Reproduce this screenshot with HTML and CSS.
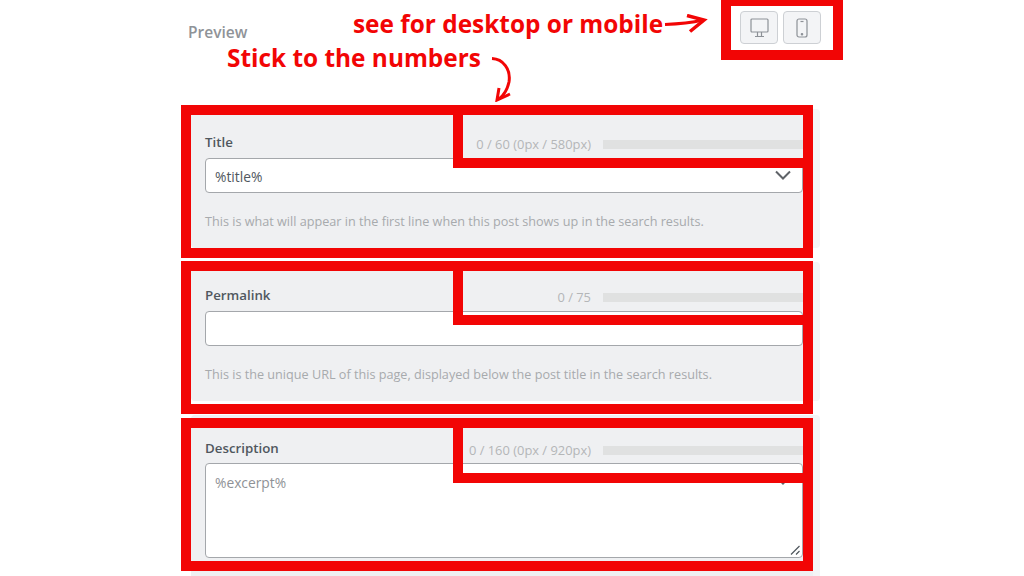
FILE: index.html
```html
<!DOCTYPE html>
<html lang="en">
<head>
  <meta charset="UTF-8" />
  <title>Preview</title>
  <link rel="stylesheet" href="styles.css">
</head>
<body>

<div class="wrap">
  <div class="preview-bar">
    <span class="preview-title">Preview</span>
    <div class="devices">
      <button class="device-btn" type="button" aria-label="Desktop">
        <svg width="19" height="20" viewBox="0 0 19 20" fill="none" stroke="#8d9197" stroke-width="1.2">
          <rect x="1" y="1" width="17" height="13" rx="1" />
          <path d="M7.5 14v4M11.5 14v4M5 18.5h9" />
        </svg>
      </button>
      <button class="device-btn" type="button" aria-label="Mobile">
        <svg width="12" height="20" viewBox="0 0 12 20" fill="none" stroke="#8d9197" stroke-width="1.2">
          <rect x="1" y="1" width="10" height="18" rx="2" />
          <path d="M4.5 3.5h3" />
          <circle cx="6" cy="16.2" r=".7" fill="#8d9197" />
        </svg>
      </button>
    </div>
  </div>

  <div class="card">
    <div class="card-top">
      <label class="field-label">Title</label>
      <span class="count">0 / 60 (0px / 580px)</span>
      <div class="count-bar"></div>
    </div>
    <div class="field">
      <input class="text-input" type="text" value="%title%" />
      <svg class="chevron" width="16" height="10" viewBox="0 0 16 10" fill="none" stroke="#5f6368" stroke-width="2"><path d="M1 1.5l7 7 7-7" /></svg>
    </div>
    <p class="hint">This is what will appear in the first line when this post shows up in the search results.</p>
  </div>

  <div class="card">
    <div class="card-top">
      <label class="field-label">Permalink</label>
      <span class="count">0 / 75</span>
      <div class="count-bar"></div>
    </div>
    <div class="field">
      <input class="text-input" type="text" />
    </div>
    <p class="hint">This is the unique URL of this page, displayed below the post title in the search results.</p>
  </div>

  <div class="card card-last">
    <div class="card-top">
      <label class="field-label">Description</label>
      <span class="count">0 / 160 (0px / 920px)</span>
      <div class="count-bar"></div>
    </div>
    <div class="field">
      <textarea class="text-area" placeholder="%excerpt%"></textarea>
      <svg class="chevron" width="16" height="10" viewBox="0 0 16 10" fill="none" stroke="#5f6368" stroke-width="2"><path d="M1 1.5l7 7 7-7" /></svg>
      <svg class="grip" width="10" height="10" viewBox="0 0 10 10" fill="none" stroke="#50575e" stroke-width="1.2"><path d="M1 9.500L9.500 1M6 9.500L9.500 6" /></svg>
    </div>
  </div>
</div>

<!-- annotations drawn over the screenshot -->
<div class="mark mark-devices"></div>
<div class="mark mark-card-1"></div>
<div class="mark mark-card-2"></div>
<div class="mark mark-card-3"></div>
<div class="mark mark-count-1"></div>
<div class="mark mark-count-2"></div>
<div class="mark mark-count-3"></div>

<span class="note note-devices">see for desktop or mobile</span>
<span class="note note-numbers">Stick to the numbers</span>

<svg class="arrow arrow-right" width="44" height="22" viewBox="0 0 44 22" fill="none" stroke="#f20505" stroke-width="3">
  <path d="M1 10.500C14 10 28 8.500 39 6" />
  <path d="M23 1.500L40 6 26 17.500" stroke-width="3.500" />
</svg>
<svg class="arrow arrow-curve" width="24" height="46" viewBox="0 0 24 46" fill="none" stroke="#f20505" stroke-width="3">
  <path d="M3 2.500C14 3 22 13 20 26 18.500 33 15 39 10 43" />
  <path d="M10 32L8 44 21 38" />
</svg>

</body>
</html>
```

FILE: styles.css
```css
* { box-sizing: border-box; }
body {
  margin: 0;
  height: 576px;
  overflow: hidden;
  position: relative;
  background: #fff;
  font-family: 'Open Sans', sans-serif;
}
.wrap {
  width: 630px;
  margin-left: 191px;
}
.preview-bar {
  height: 109px;
  padding-top: 11px;
  display: flex;
  justify-content: space-between;
  align-items: flex-start;
  margin-left: -3px;
}
.preview-title {
  margin-top: 11px;
  font-size: 15.500px;
  line-height: 20px;
  font-weight: 600;
  color: #8f9398;
}
.devices {
  display: flex;
  gap: 5px;
}
.device-btn {
  width: 38px;
  height: 33px;
  padding: 0;
  display: flex;
  align-items: center;
  justify-content: center;
  background: #f3f4f6;
  border: 1px solid #cdd0d4;
  border-radius: 4px;
}
.card {
  height: 139px;
  margin-bottom: 14px;
  margin-right: 1px;
  padding: 20px 10px 0 14px;
  background: #eff0f2;
  border-right: 7px solid #f4f5f6;
  border-radius: 4px;
}
.card-last {
  height: 170px;
}
.card-last .card-top {
  margin-bottom: 2px;
}
.card-top {
  height: 26px;
  margin-bottom: 3px;
  display: flex;
  align-items: center;
}
.field-label {
  font-size: 13.300px;
  font-weight: 600;
  color: #50575e;
  margin-right: auto;
}
.count {
  margin-top: 4px;
  font-size: 12.900px;
  color: #b4b6b8;
}
.count-bar {
  width: 200px;
  height: 9px;
  margin: 4px 0 0 12px;
  background: #e0e1e1;
}
.field {
  position: relative;
}
.text-input,
.text-area {
  display: block;
  width: 100%;
  padding: 0 9px;
  border: 1px solid #a4a7ab;
  border-radius: 4px;
  background: #fff;
  font-family: inherit;
  font-size: 13.800px;
  color: #50575e;
  outline: none;
}
.text-input {
  height: 35px;
  padding-top: 2px;
}
.text-area {
  height: 95px;
  padding-top: 9px;
  resize: none;
}
.text-area::placeholder {
  color: #8f9296;
  opacity: 1;
}
.chevron {
  position: absolute;
  top: 12px;
  right: 12px;
}
.grip {
  position: absolute;
  right: 3px;
  bottom: 3px;
}
.hint {
  margin: 19px 0 0;
  font-size: 12.650px;
  line-height: 18px;
  color: #a7aaad;
}

/* red annotation boxes */
.mark {
  position: absolute;
  border: 10px solid #f20505;
}
.mark-devices { left: 721px; top: -4px; width: 122px; height: 64px; }
.mark-card-1 { left: 181px; top: 105px; width: 632px; height: 153px; }
.mark-card-2 { left: 181px; top: 261px; width: 632px; height: 153px; }
.mark-card-3 { left: 181px; top: 418px; width: 632px; height: 153px; }
.mark-count-1 { left: 453px; top: 105px; width: 360px; height: 63px; }
.mark-count-2 { left: 453px; top: 261px; width: 360px; height: 64px; }
.mark-count-3 { left: 453px; top: 418px; width: 360px; height: 65px; }

.note {
  position: absolute;
  font-size: 24.400px;
  line-height: 30px;
  font-weight: 700;
  color: #f20505;
  white-space: nowrap;
}
.note-devices { left: 353px; top: 9px; }
.note-numbers { left: 227px; top: 43px; }
.arrow {
  position: absolute;
}
.arrow-right { left: 664px; top: 14px; }
.arrow-curve { left: 489px; top: 56px; }
```
